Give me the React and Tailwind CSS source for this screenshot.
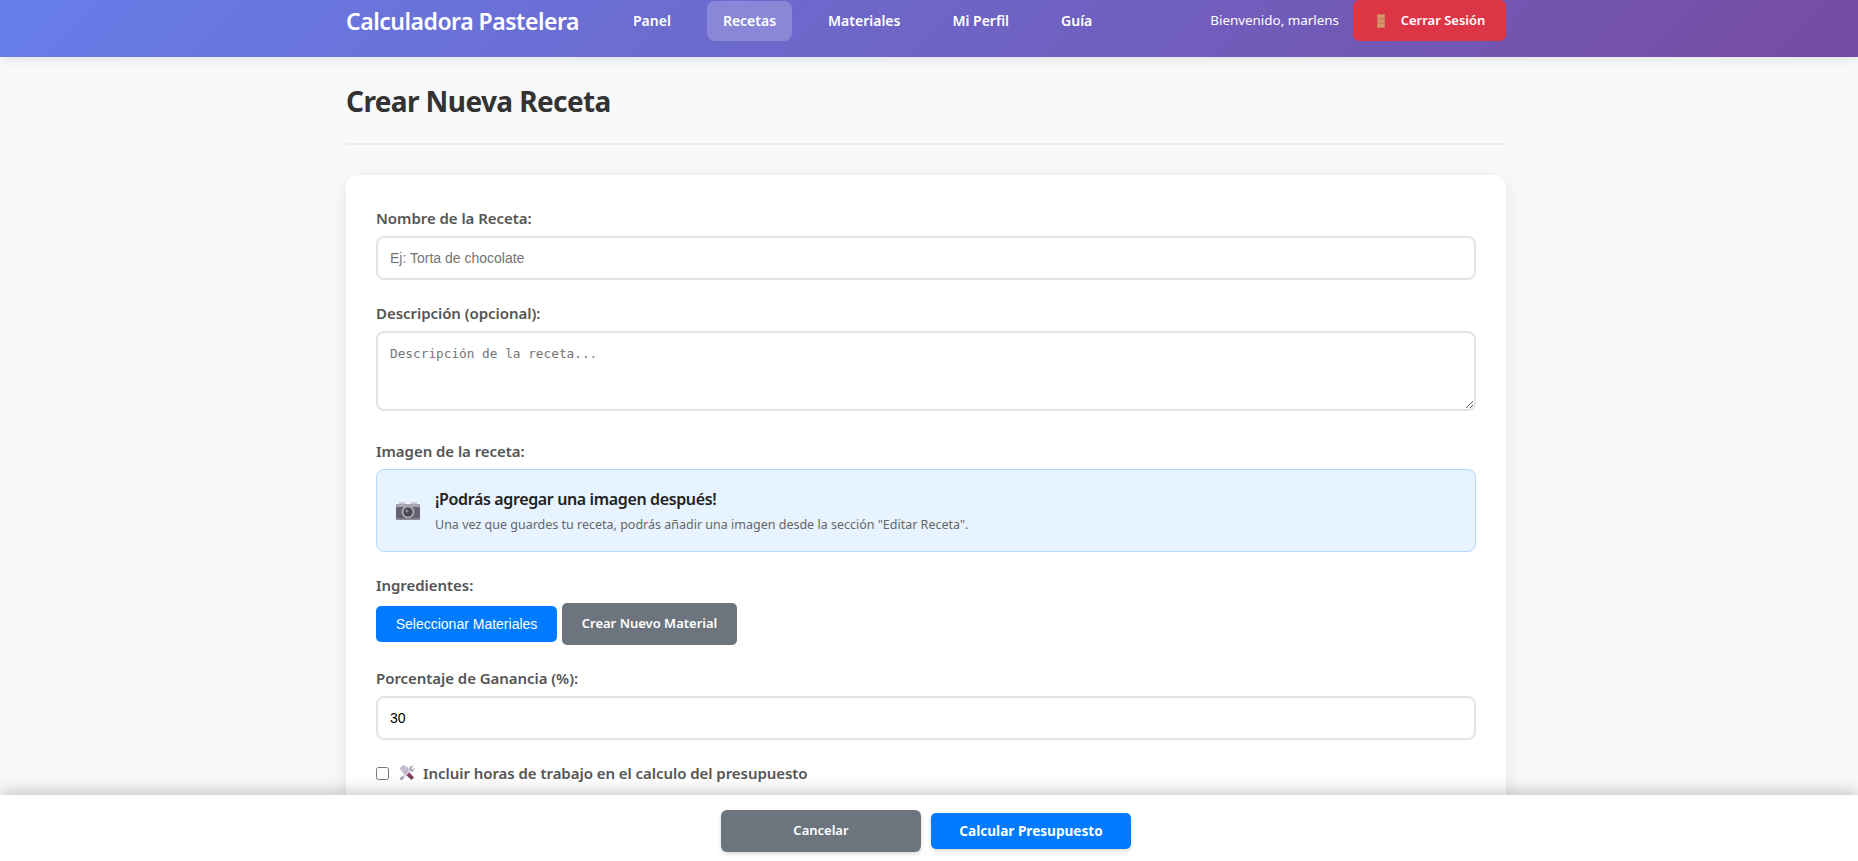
import React from "react";

const sans = "font-['Noto_Sans','Open_Sans',sans-serif]";

function Door() {
  return (
    <svg width="8" height="14" viewBox="0 0 8 14" className="shrink-0">
      <rect width="8" height="14" fill="#c8805a" />
      <rect x="1" y="1" width="6" height="3" fill="#d9946c" />
      <rect x="1" y="5.5" width="6" height="3" fill="#d9946c" />
      <rect x="1" y="10" width="6" height="3" fill="#d9946c" />
    </svg>
  );
}

function Camera() {
  return (
    <svg width="26" height="20" viewBox="0 0 26 20" className="shrink-0">
      <rect x="4" y="1" width="6" height="3" rx="1" fill="#c9c4d6" />
      <rect x="16" y="1" width="6" height="3" rx="1" fill="#c9c4d6" />
      <rect x="1" y="3" width="24" height="16" rx="1.5" fill="#65626e" />
      <rect x="1" y="3" width="24" height="3" fill="#a8a4b6" />
      <rect x="1" y="17.5" width="24" height="1.5" fill="#8f8c9c" />
      <circle cx="13" cy="11" r="6.5" fill="#a9a6ae" />
      <circle cx="13" cy="11" r="4.5" fill="#4a4652" />
      <circle cx="12" cy="10" r="1.5" fill="#8d8a96" />
    </svg>
  );
}

function Tools() {
  return (
    <svg width="18" height="18" viewBox="0 0 18 18" className="shrink-0">
      <path d="M6 9 L9 6 L16 13.5 L13.5 16 Z" fill="#7f3f5f" />
      <path d="M1.5 4.5 L5 1 L9.5 3 L11 5.5 L6 10.5 L4 7.5 Z" fill="#c4bfcf" />
      <path d="M3 14 L11.5 5 L13 6.5 L4.5 15.5 Z" fill="#d4d0dc" />
      <path d="M11 6 C10.5 3 13 1 15.5 2 L13.5 4 L14.5 5.5 L16.5 4 C17 7 14.5 8.5 12.5 7.5 Z" fill="#b5b0c0" />
      <path d="M1.5 14.5 L4 12 L6 14 L3.5 16.5 Z" fill="#a79fb3" />
    </svg>
  );
}

function Label({ children, className = "" }) {
  return (
    <label className={`block text-[15px] leading-[20px] font-semibold tracking-[-0.05px] text-[#555] ${className}`}>
      {children}
    </label>
  );
}

const inputCls =
  "block w-full h-[44px] rounded-[8px] border-2 border-[#e1e5e9] bg-white px-[12px] text-[14px] font-['Liberation_Sans',sans-serif] text-black placeholder:text-[#757575] outline-none";

export default function App() {
  return (
    <div className={`relative h-[861px] overflow-hidden bg-[#f8f9fa] ${sans}`}>
      <header className="h-[57px] bg-[linear-gradient(135deg,#667eea_0%,#764ba2_100%)] shadow-[0_2px_10px_rgba(0,0,0,0.1)] pr-[6px]">
        <div className="mx-auto flex h-[41px] w-[1160px] items-center justify-between">
          <div className="flex items-center">
            <span className="w-[271px] whitespace-nowrap text-[23px] leading-[32px] font-semibold tracking-[-0.48px] text-white">
              Calculadora Pastelera
            </span>
            <nav className="flex items-center text-[14px] font-semibold text-white">
              {["Panel", "Recetas", "Materiales", "Mi Perfil", "Guía"].map((n) => (
                <a
                  key={n}
                  className={`flex h-[40px] items-center rounded-[8px] px-[16px] mr-[20px] ${n === "Recetas" ? "bg-white/20" : ""}`}
                >
                  {n}
                </a>
              ))}
            </nav>
          </div>
          <div className="flex items-center gap-[14px]">
            <span className="text-[13.4px] text-white">Bienvenido, marlens</span>
            <button className="flex h-[41px] w-[153px] items-center justify-center gap-[16px] rounded-[6px] bg-[#dc3545] pl-[3px] text-[13px] font-semibold text-white">
              <Door />
              Cerrar Sesión
            </button>
          </div>
        </div>
      </header>

      <main className="pr-[6px]">
        <div className="mx-auto w-[1160px]">
          <div className="h-[88px] border-b-2 border-[#e9ecef] pt-[25px]">
            <h1 className="text-[28px] leading-[38px] font-bold tracking-[-0.6px] text-[#333]">Crear Nueva Receta</h1>
          </div>
          <div className="mt-[30px] rounded-[12px] bg-white px-[30px] pt-[33px] pb-[40px] shadow-[0_4px_20px_rgba(0,0,0,0.08)]">
            <Label className="mb-[8px]">Nombre de la Receta:</Label>
            <input className={inputCls} placeholder="Ej: Torta de chocolate" />

            <Label className="mt-[23px] mb-[8px]">Descripción (opcional):</Label>
            <textarea
              className="block h-[80px] w-full rounded-[8px] border-2 border-[#e1e5e9] bg-white px-[12px] py-[11px] font-['DejaVu_Sans_Mono',monospace] text-[12.75px] outline-none placeholder:text-[#757575]"
              placeholder="Descripción de la receta..."
            />

            <Label className="mt-[30px] mb-[8px]">Imagen de la receta:</Label>
            <div className="flex h-[83px] items-center gap-[14px] rounded-[8px] border border-[#b3d9ff] bg-[#e7f3ff] px-[18px]">
              <Camera />
              <div>
                <div className="-mt-[1px] text-[16px] leading-[22px] font-semibold tracking-[-0.37px] text-[#222]">
                  ¡Podrás agregar una imagen después!
                </div>
                <div className="mt-[7px] text-[12.5px] leading-[16px] text-[#666]">
                  Una vez que guardes tu receta, podrás añadir una imagen desde la sección "Editar Receta".
                </div>
              </div>
            </div>

            <Label className="mt-[23px] mb-[8px]">Ingredientes:</Label>
            <div className="flex items-center gap-[5px]">
              <button className="h-[36px] w-[181px] rounded-[5px] bg-[#007bff] font-['Liberation_Sans',sans-serif] text-[14px] text-white">
                Seleccionar Materiales
              </button>
              <button className="h-[42px] w-[175px] rounded-[5px] bg-[#6c757d] text-[13px] font-semibold text-white">
                Crear Nuevo Material
              </button>
            </div>

            <Label className="mt-[23px] mb-[8px]">Porcentaje de Ganancia (%):</Label>
            <input className={inputCls} defaultValue="30" />

            <label className="mt-[22px] flex items-center text-[15px] font-semibold text-[#555]">
              <input type="checkbox" className="mr-[9px] h-[13px] w-[13px] appearance-auto" />
              <Tools />
              <span className="ml-[7px] tracking-[-0.05px]">Incluir horas de trabajo en el calculo del presupuesto</span>
            </label>
          </div>
        </div>
      </main>

      <footer className="absolute inset-x-0 bottom-0 h-[66px] bg-white shadow-[0_-4px_15px_rgba(0,0,0,0.2)] pr-[6px]">
        <div className="flex h-full items-start justify-center gap-[10px] pt-[15px]">
          <button className="h-[42px] w-[200px] rounded-[6px] bg-[#6c757d] text-[13px] font-semibold text-white shadow-[0_2px_4px_rgba(0,0,0,0.15)]">
            Cancelar
          </button>
          <button className="mt-[3px] h-[36px] w-[200px] rounded-[5px] bg-[#007bff] text-[13.6px] font-bold text-white shadow-[0_2px_4px_rgba(0,0,0,0.15)]">
            Calcular Presupuesto
          </button>
        </div>
      </footer>
    </div>
  );
}
